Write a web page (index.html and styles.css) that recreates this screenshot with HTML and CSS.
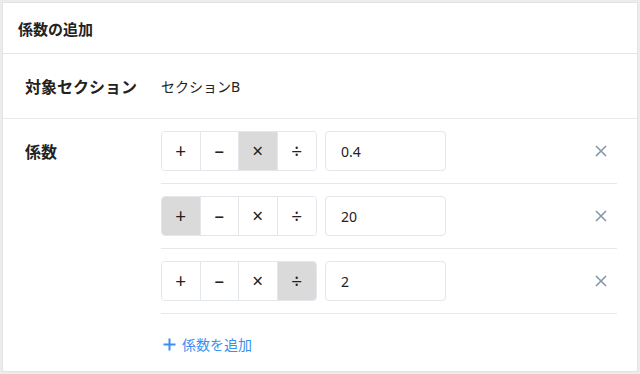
FILE: index.html
```html
<!DOCTYPE html>
<html lang="ja">
<head>
    <meta charset="UTF-8">
    <meta name="viewport" content="width=device-width, initial-scale=1.0">
    <title>係数の追加</title>
    <link rel="stylesheet" href="styles.css">
</head>
<body>
    <div class="card">
        <div class="card-header">係数の追加</div>

        <div class="field-row target-row">
            <div class="field-label">対象セクション</div>
            <div class="field-value">セクションB</div>
        </div>

        <div class="field-row coef-section">
            <div class="field-label coef-label">係数</div>
            <div class="coef-list">
                <div class="coef-row">
                    <div class="op-group">
                        <button class="op-button">+</button>
                        <button class="op-button">–</button>
                        <button class="op-button active">×</button>
                        <button class="op-button">÷</button>
                    </div>
                    <input class="coef-input" type="text" value="0.4">
                    <button class="remove-button" aria-label="削除">
                        <svg width="12" height="12" viewBox="0 0 12 12"><path d="M1 1L11 11M11 1L1 11" stroke="currentColor" stroke-width="1.6" fill="none"/></svg>
                    </button>
                </div>
                <div class="coef-row">
                    <div class="op-group">
                        <button class="op-button active">+</button>
                        <button class="op-button">–</button>
                        <button class="op-button">×</button>
                        <button class="op-button">÷</button>
                    </div>
                    <input class="coef-input" type="text" value="20">
                    <button class="remove-button" aria-label="削除">
                        <svg width="12" height="12" viewBox="0 0 12 12"><path d="M1 1L11 11M11 1L1 11" stroke="currentColor" stroke-width="1.6" fill="none"/></svg>
                    </button>
                </div>
                <div class="coef-row">
                    <div class="op-group">
                        <button class="op-button">+</button>
                        <button class="op-button">–</button>
                        <button class="op-button">×</button>
                        <button class="op-button active">÷</button>
                    </div>
                    <input class="coef-input" type="text" value="2">
                    <button class="remove-button" aria-label="削除">
                        <svg width="12" height="12" viewBox="0 0 12 12"><path d="M1 1L11 11M11 1L1 11" stroke="currentColor" stroke-width="1.6" fill="none"/></svg>
                    </button>
                </div>
                <a class="add-link" href="#">
                    <svg width="13" height="13" viewBox="0 0 13 13"><path d="M6.5 0.5V12.5M0.5 6.5H12.5" stroke="currentColor" stroke-width="2" fill="none"/></svg>
                    <span>係数を追加</span>
                </a>
            </div>
        </div>
    </div>
</body>
</html>
```

FILE: styles.css
```css
* {
    margin: 0;
    padding: 0;
    box-sizing: border-box;
    font-family: 'Noto Sans', 'Noto Sans CJK JP', sans-serif;
}

body {
    background: #ececec;
    padding: 2px;
    color: #222;
    height: 374px;
}

.card {
    background: #fff;
    border: 1px solid #e3e3e3;
    height: 370px;
    width: 636px;
}

.card-header {
    height: 51px;
    padding: 0 15px;
    display: flex;
    align-items: center;
    font-size: 15px;
    font-weight: bold;
    border-bottom: 1px solid #e6e6e6;
}

.field-row {
    display: flex;
    padding: 0 0 0 22px;
    border-bottom: 1px solid #e6e9ec;
}

.target-row {
    height: 65px;
}

.field-label {
    width: 136px;
    font-size: 16px;
    font-weight: bold;
    display: flex;
    align-items: center;
}

.field-value {
    font-size: 14px;
    display: flex;
    align-items: center;
}

.coef-section {
    border-bottom: none;
}

.coef-label {
    align-items: flex-start;
    padding-top: 20px;
}

.coef-list {
    width: 456px;
}

.coef-row {
    display: flex;
    align-items: center;
    padding: 12px 0;
    border-bottom: 1px solid #e6e9ec;
}

.op-group {
    display: flex;
    border: 1px solid #e3e6ea;
    border-radius: 4px;
    overflow: hidden;
    height: 40px;
}

.op-button {
    width: 38.5px;
    border: none;
    border-right: 1px solid #e3e6ea;
    background: #fff;
    font-size: 19px;
    line-height: 1;
    color: #222;
    cursor: pointer;
}

.op-button:last-child {
    border-right: none;
}

.op-button.active {
    background: #dadada;
}

.coef-input {
    margin-left: 8px;
    width: 121px;
    height: 40px;
    border: 1px solid #e3e6ea;
    border-radius: 4px;
    padding: 0 15px;
    font-size: 14px;
    color: #222;
    outline: none;
}

.remove-button {
    margin-left: auto;
    margin-right: 10px;
    background: none;
    border: none;
    color: #8797a8;
    width: 12px;
    height: 12px;
    display: flex;
    cursor: pointer;
}

.add-link {
    display: flex;
    align-items: center;
    gap: 6px;
    margin-top: 20px;
    padding-left: 2px;
    color: #3b8ff0;
    text-decoration: none;
    font-size: 14px;
}
```
